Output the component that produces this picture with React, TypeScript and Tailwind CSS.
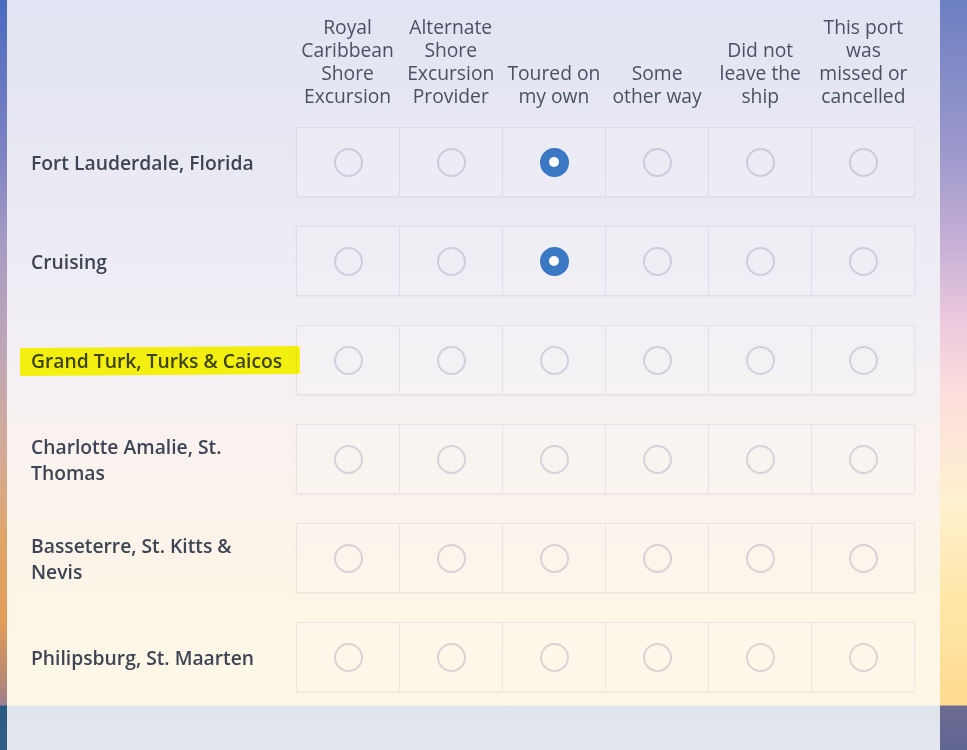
const COLUMNS: string[][] = [
  ["Royal", "Caribbean", "Shore", "Excursion"],
  ["Alternate", "Shore", "Excursion", "Provider"],
  ["Toured on", "my own"],
  ["Some", "other way"],
  ["Did not", "leave the", "ship"],
  ["This port", "was", "missed or", "cancelled"],
];

interface Port {
  lines: string[];
  selected: number | null;
  highlight?: boolean;
}

const PORTS: Port[] = [
  { lines: ["Fort Lauderdale, Florida"], selected: 2 },
  { lines: ["Cruising"], selected: 2 },
  { lines: ["Grand Turk, Turks & Caicos"], selected: null, highlight: true },
  { lines: ["Charlotte Amalie, St.", "Thomas"], selected: null },
  { lines: ["Basseterre, St. Kitts &", "Nevis"], selected: null },
  { lines: ["Philipsburg, St. Maarten"], selected: null },
];

function Radio({ checked }: { checked: boolean }) {
  if (checked) {
    return (
      <span className="flex h-[29px] w-[29px] items-center justify-center rounded-full bg-[#3b78c4]">
        <span className="h-[10px] w-[10px] rounded-full bg-white" />
      </span>
    );
  }
  return <span className="h-[29px] w-[29px] rounded-full border-2 border-[rgba(40,50,110,0.17)]" />;
}

function PortLabel({ port }: { port: Port }) {
  return (
    <div className="flex items-center pt-px text-[19.3px] font-semibold leading-[26px] text-[#3d4453]">
      <span className="relative">
        {port.lines.map((l, i) => (
          <span key={i} className="block whitespace-nowrap">
            {l}
          </span>
        ))}
        {port.highlight && (
          <span className="pointer-events-none absolute -left-[11px] -right-[18px] -top-[1px] h-[28px] -rotate-[0.4deg] rounded-[2px] bg-[#ffff10] mix-blend-multiply" />
        )}
      </span>
    </div>
  );
}

export default function App() {
  return (
    <div className="flex h-[750px] w-full overflow-hidden font-['Open_Sans',sans-serif]">
      {/* left edge of the photo */}
      <div className="w-[7px] shrink-0 bg-[linear-gradient(to_bottom,#4a6bc1_0px,#7d82c2_150px,#a99cc2_250px,#bfa7b8_350px,#d3aa98_450px,#e0a468_540px,#e29e58_620px,#b98872_680px,#9a8090_705px,#2b5a80_706px,#2f5f88_750px)]" />

      <main className="w-[933px] shrink-0 bg-[linear-gradient(to_bottom,#e1e4f2_0px,#ebeaf4_200px,#f2eff4_350px,#f9f2ef_450px,#fcf4e8_560px,#fff7e6_705px,#dfe3eb_706px,#e3e6ec_750px)] pl-6 pr-[25px] pt-[15px]">
        {/* column headers */}
        <div className="grid grid-cols-[265px_repeat(6,1fr)]">
          <div />
          {COLUMNS.map((lines, i) => (
            <div
              key={i}
              className="flex h-[92px] flex-col justify-end text-center text-[19.3px] leading-[23px] text-[#4a5161]"
            >
              {lines.map((l) => (
                <span key={l} className="whitespace-nowrap">{l}</span>
              ))}
            </div>
          ))}
        </div>

        {/* rows */}
        <div className="mt-[20px] flex flex-col gap-[29px]">
          {PORTS.map((port) => (
            <div key={port.lines.join(" ")} className="grid grid-cols-[265px_1fr]">
              <PortLabel port={port} />
              <div className="flex h-[70px] divide-x divide-[rgba(30,40,90,0.08)] border border-[rgba(30,40,90,0.08)] bg-white/15 shadow-[0_1px_2px_rgba(0,0,0,0.04)]">
                {COLUMNS.map((_, ci) => (
                  <div key={ci} className="flex flex-1 items-center justify-center">
                    <Radio checked={port.selected === ci} />
                  </div>
                ))}
              </div>
            </div>
          ))}
        </div>
      </main>

      {/* right edge of the photo */}
      <div className="flex-1 bg-[linear-gradient(to_bottom,#6c80c2_0px,#9c98cc_150px,#c9b1d6_250px,#ecc9dd_320px,#fde0dc_400px,#fff0cf_500px,#ffe7a8_600px,#ffda90_705px,#6d6c94_706px,#5f6590_750px)]" />
    </div>
  );
}
